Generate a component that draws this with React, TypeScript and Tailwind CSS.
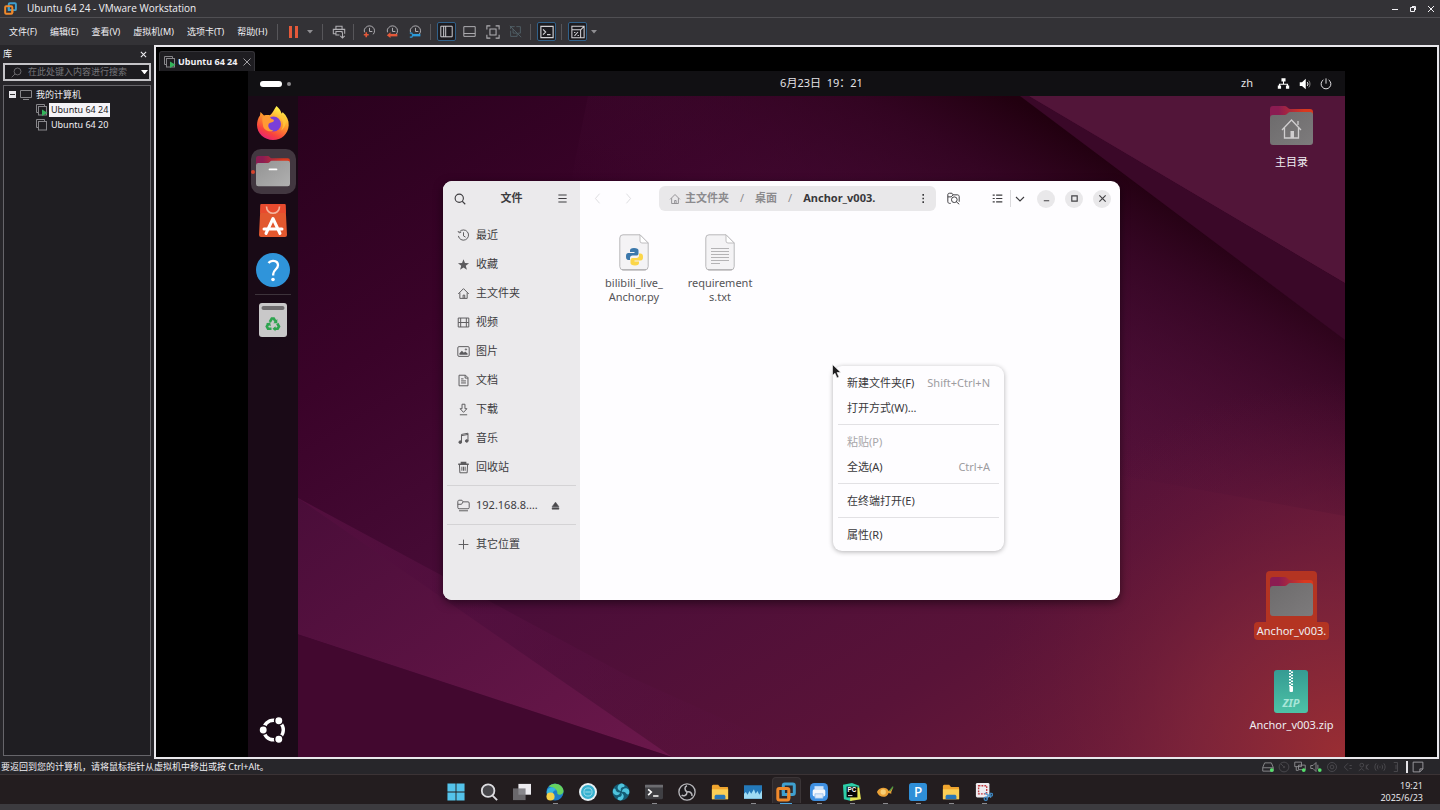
import React from "react";

type IconProps = { children: React.ReactNode; className?: string; box?: number; width?: number };

function Line({ children, className = "size-4", box = 16, width = 1 }: IconProps) {
  return (
    <svg aria-hidden="true" viewBox={`0 0 ${box} ${box}`} className={`shrink-0 ${className}`} fill="none" stroke="currentColor" strokeWidth={width}>
      {children}
    </svg>
  );
}

function VmwareLogo({ className }: { className: string }) {
  return (
    <svg aria-hidden="true" viewBox="0 0 20 20" className={`shrink-0 ${className}`} fill="none" strokeWidth="3">
      <rect x="7.300" y="2" width="11" height="10.500" rx="1.500" stroke="#3fa0cf" />
      <rect x="1.800" y="6.500" width="11" height="11.500" rx="1.500" stroke="#f0892b" />
      <path d="M7.300 8v4.500H11" stroke="#3fa0cf" />
      <path d="M12.800 11.500v5" stroke="#f0892b" />
    </svg>
  );
}

function VmIcon({ on }: { on: boolean }) {
  return (
    <Line className="size-[12px] text-[#87868a]" box={12}>
      <path d="M2.500 8.500h-2v-8h8v2" />
      <rect x="2.500" y="2.500" width="8" height="8.500" />
      {on && <path d="M6 5.500v6.500l5.500-3.200z" fill="#35b45c" stroke="none" />}
    </Line>
  );
}

function FolderArt({ id, mark, className }: { id: string; mark: "home" | "dash" | "none"; className: string }) {
  return (
    <svg aria-hidden="true" viewBox="0 0 43 40" className={className} preserveAspectRatio="none">
      <defs>
        <linearGradient id={`${id}t`} x1="0" x2="1">
          <stop offset="0.2" stopColor="#8b1c52" />
          <stop offset="0.8" stopColor="#d9391f" />
        </linearGradient>
        <linearGradient id={`${id}f`} x1="0" x2="1" y2="1">
          <stop offset="0" stopColor={mark === "dash" ? "#939393" : "#6d6b6c"} />
          <stop offset="1" stopColor={mark === "dash" ? "#b0b0b0" : "#7d7b7c"} />
        </linearGradient>
      </defs>
      <path d="M0 10V3a3 3 0 0 1 3-3h12c2 0 3 3 5 3h20a3 3 0 0 1 3 3v6H0z" fill={`url(#${id}t)`} />
      <path d="M0 12a3 3 0 0 1 3-3h12c2 0 3-3 5-3h20a3 3 0 0 1 3 3v27a3 3 0 0 1-3 3H3a3 3 0 0 1-3-3z" fill={`url(#${id}f)`} />
      {mark === "dash" && <rect x="16" y="16" width="11" height="2.500" rx="1.200" fill="#fff" />}
      {mark === "home" && (
        <g fill="none" stroke="#d0cecf" strokeWidth="1.300">
          <path d="M12 24l9.500-10 9.500 10M14.500 22v10h14V22M28 15v4" />
          <rect x="20.500" y="25" width="3.500" height="7" fill="#d0cecf" stroke="none" />
        </g>
      )}
    </svg>
  );
}

const HomeShape = <path d="M1.500 8.500L8 2l6.500 6.500M3.500 7v7h9V7M7.500 14v-4h2v4" />;

const places = [
  { name: "最近", icon: <path d="M3 3.500a6.300 6.300 0 1 1-1.300 5M1.200 2.500l1.500 2.300 2.500-1M8 4v4.500l2.500 1.500" /> },
  { name: "收藏", icon: <path d="M8 1.500l1.800 4.700 5 .2-4 3.100 1.400 4.900L8 11.600l-4.200 2.800 1.400-4.900-4-3.100 5-.2z" fill="currentColor" stroke="none" /> },
  { name: "主文件夹", icon: HomeShape },
  { name: "视频", icon: <path d="M1.500 2.500h13v11h-13zM4.500 2.500v11M11.500 2.500v11M4.500 8h7M1.500 8h3M11.500 8h3" /> },
  { name: "图片", icon: <><rect x="1" y="2" width="14" height="12" rx="1.500" /><path d="M3 12V10l3-3 2.500 2.500 1.500-1.500 3 2.500V12z" fill="currentColor" stroke="none" /><circle cx="11" cy="5.500" r=".8" /></> },
  { name: "文档", icon: <path d="M2.500 1.500h8l3 3v10h-11zM10 1.500v3.500h3.500M5 6h3M5 8.500h6M5 11h6" /> },
  { name: "下载", icon: <path d="M6.200 1.500h3.600V7h2.400L8 11.500 3.800 7h2.400zM3.500 14.500h9" /> },
  { name: "音乐", icon: <><path d="M5.500 12.500V3l8-1.500v9.500M5.500 4.500l8-1.500" /><circle cx="4" cy="12.500" r="1.600" fill="currentColor" /><circle cx="12" cy="11" r="1.600" fill="currentColor" /></> },
  { name: "回收站", icon: <><path d="M1.500 4h13M5.500 3.500V2h5v1.500" strokeWidth="2" /><path d="M3 4.500l.5 10h9l.5-10M6 7v5M8 7v5M10 7v5" /></> },
];

function Place({ name, icon, eject = false }: { name: string; icon: React.ReactNode; eject?: boolean }) {
  return (
    <li>
      <button className="flex h-[29px] w-full items-center gap-[6px] pl-[14px] pr-5 text-left">
        <Line className="size-[13px] text-[#5b5a5d]" width={1.2}>{icon}</Line>
        <span className="flex-1 whitespace-nowrap">{name}</span>
        {eject && <Line className="size-[9px] text-[#4a494c]"><path d="M8 2l6 8H2zM2 12h12v2.500H2z" fill="currentColor" /></Line>}
      </button>
    </li>
  );
}

function Sep() {
  return <span className="ml-[3px] mr-1 h-4 w-px bg-[#57565a]" />;
}

function Tool({ label, on = false, children }: { label: string; on?: boolean; children: React.ReactNode }) {
  return (
    <button aria-label={label} className="flex w-[23px] items-center justify-center">
      <span className={on ? "flex size-[19px] items-center justify-center rounded-[2px] border border-[#31618a] bg-[#1d1c20] text-[#d3d2d6]" : "flex size-[19px] items-center justify-center"}>
        {children}
      </span>
    </button>
  );
}

const clock = <><path d="M3.500 3a5.800 5.800 0 1 1 9 8.500M3 3.200A6 6 0 0 0 1.800 9M8 3.500v4.500h3.500" /></>;

function Toolbar() {
  return (
    <div className="flex items-center text-[#b1b0b4]">
      <Sep />
      <button aria-label="挂起" className="flex w-[23px] justify-center gap-[3px]">
        <span className="h-3 w-[3px] bg-[#e4593a]" />
        <span className="h-3 w-[3px] bg-[#e4593a]" />
      </button>
      <Caret />
      <Sep />
      <Tool label="发送"><Line className="size-[14px]" width={1.2}><path d="M4.500 5V1.500h7V5M8.500 11.500H4.500V7.500h7V9M4.500 10H1.500V5h13v5M12 8.500V15M9.500 12.500L12 15l2.500-2.500" /></Line></Tool>
      <Sep />
      <Tool label="拍摄快照"><Line className="size-[13px]" width={1.2}>{clock}<path d="M4 9v6M1 12h6" stroke="#e4593a" strokeWidth="2" /></Line></Tool>
      <Tool label="恢复快照"><Line className="size-[13px]" width={1.2}>{clock}<path d="M5 12.500h9" stroke="#e4593a" strokeWidth="3" /><path d="M1 12.500L5.500 9v7z" fill="#e4593a" stroke="none" /></Line></Tool>
      <Tool label="管理快照"><Line className="size-[13px]" width={1.2}>{clock}<path d="M4 12.500h10" stroke="#2d9cdb" strokeWidth="3" /><path d="M1 10h2.500l1 2.500-1 2.500H1" stroke="#2d9cdb" strokeWidth="1.500" /></Line></Tool>
      <Sep />
      <Tool label="显示库" on><Line className="size-[13px]" width={1.2}><path d="M1 1.500h14v13H1zM4.500 1.500v13M7 1.500v13" /></Line></Tool>
      <Tool label="缩略图"><Line className="size-[13px]" width={1.2}><path d="M1 2h14v12H1zM1 10.500h14" /></Line></Tool>
      <Tool label="全屏"><Line className="size-[14px]" width={1.2}><path d="M1 5V1h4M11 1h4v4M15 11v4h-4M5 15H1v-4M4.500 4.500h7v7h-7z" /></Line></Tool>
      <Tool label="Unity"><Line className="size-[13px] text-[#55666e]" width={1}><path d="M2 5V2h5M9 2h5v8h-3M2 7v7h8v-3M5 5v5h5M1 1l14 14" /></Line></Tool>
      <Sep />
      <Tool label="控制台" on><Line className="size-[14px]" width={1.3}><path d="M1 1.500h14v13H1zM3.500 5L6.500 8l-3 3M8 11h4" /></Line></Tool>
      <Sep />
      <Tool label="自由拉伸" on><Line className="size-[14px]" width={1.2}><path d="M1 5V1.500h14v13h-4M1 5.500h10v9H1zM11 5.500l4-4M8 8l-4 4.500M3.500 8.500h1.500M7.500 12h1.500" /></Line></Tool>
      <Caret />
    </div>
  );
}

function Caret() {
  return (
    <button aria-label="更多" className="flex w-[14px] pl-[2px] text-[#8f8e92]">
      <svg viewBox="0 0 6 4" className="w-[6px]"><path d="M0 0h6L3 3.500z" fill="currentColor" /></svg>
    </button>
  );
}

const menus = ["文件(F)", "编辑(E)", "查看(V)", "虚拟机(M)", "选项卡(T)", "帮助(H)"];

function Library() {
  return (
    <aside className="flex w-[154px] shrink-0 flex-col bg-[#27262a] pb-[3px] pl-[3px] pr-[3px] text-[9px]">
      <div className="flex h-[18px] items-center justify-between pr-1">
        <h2>库</h2>
        <button aria-label="关闭库"><Line className="size-[7px]" box={8} width={1.2}><path d="M1 1l6 6M7 1L1 7" /></Line></button>
      </div>
      <label className="flex h-[18px] items-center gap-[6px] border-2 border-[#c4c3c7] bg-[#1c1b1f] pl-[6px] pr-[1px]">
        <Line className="size-[11px] text-[#8a898d]"><path d="M1 15l5-5" /><circle cx="9.500" cy="6.500" r="5" /></Line>
        <input aria-label="搜索" placeholder="在此处键入内容进行搜索" className="min-w-0 flex-1 bg-transparent text-[9px] outline-none placeholder:text-[#77767a]" />
        <svg viewBox="0 0 8 5" className="w-[7px] shrink-0"><path d="M0 0h8L4 5z" fill="#fff" /></svg>
      </label>
      <div className="mt-1 flex-1 border border-[#66656a] bg-[#1f1e22] pt-px text-[#f1f0f4]">
        <div className="flex h-[15px] items-center gap-1 pl-[5px]">
          <span className="flex size-[7px] items-center justify-center bg-[#e8e7eb]"><span className="h-px w-[5px] bg-[#333]" /></span>
          <Line className="size-[12px] text-[#87868a]" box={12}><path d="M.5 1.500h11v7H.5zM3 10.500h6" /></Line>
          <span>我的计算机</span>
        </div>
        <div className="flex h-[15px] items-center gap-px pl-8">
          <VmIcon on />
          <button className="h-[14px] whitespace-nowrap bg-[#f4f3f7] px-[2px] leading-[14px] text-[#222]">Ubuntu 64 24</button>
        </div>
        <div className="flex h-[15px] items-center gap-px pl-8">
          <VmIcon on={false} />
          <button className="h-[14px] whitespace-nowrap px-[2px] leading-[14px]">Ubuntu 64 20</button>
        </div>
      </div>
    </aside>
  );
}

function Wallpaper() {
  return (
    <svg aria-hidden="true" viewBox="0 0 1097 661" preserveAspectRatio="none" className="absolute inset-0 size-full">
      <defs>
        <linearGradient id="base" x1="0" y1="0" x2="1" y2="1">
          <stop offset="0" stopColor="#28011c" />
          <stop offset="0.25" stopColor="#3a0329" />
          <stop offset="0.5" stopColor="#4a0d39" />
          <stop offset="0.75" stopColor="#591338" />
          <stop offset="1" stopColor="#742038" />
        </linearGradient>
        <radialGradient id="glow" gradientUnits="userSpaceOnUse" cx="1090" cy="655" r="370">
          <stop offset="0" stopColor="#982d33" />
          <stop offset="0.4" stopColor="#82263a" stopOpacity="0.7" />
          <stop offset="1" stopColor="#621539" stopOpacity="0" />
        </radialGradient>
        <linearGradient id="shade" gradientUnits="userSpaceOnUse" x1="900" y1="80" x2="750" y2="340">
          <stop offset="0" stopColor="#21000f" />
          <stop offset="0.25" stopColor="#30041f" stopOpacity="0.8" />
          <stop offset="1" stopColor="#4c0e3a" stopOpacity="0" />
        </linearGradient>
        <linearGradient id="beam" x1="0" x2="1" y2="1">
          <stop offset="0" stopColor="#4a0d39" />
          <stop offset="1" stopColor="#6b184b" />
        </linearGradient>
        <linearGradient id="sweep" x1="0" x2="1">
          <stop offset="0" stopColor="#5c1245" stopOpacity="0.7" />
          <stop offset="1" stopColor="#5c1245" stopOpacity="0" />
        </linearGradient>
      </defs>
      <rect width="1097" height="661" fill="url(#base)" />
      <path d="M340 0H780L1097 187V420L600 330 300 200z" fill="url(#shade)" />
      <path d="M50 402L50 538 424 661H560L380 580z" fill="url(#sweep)" />
      <path d="M50 402L50 538 424 661z" fill="url(#beam)" />
      <path d="M0 522L424 661H0z" fill="#42082f" />
      <path d="M772 0L1097 244V187L781 0z" fill="#3a0828" />
      <path d="M781 0H1097V187z" fill="#521539" />
      <rect width="1097" height="661" fill="url(#glow)" />
    </svg>
  );
}

function Firefox() {
  return (
    <svg aria-hidden="true" viewBox="0 0 34 34" className="size-[34px]">
      <defs>
        <linearGradient id="fx" x1="0.8" y1="0" x2="0.3" y2="1">
          <stop offset="0.1" stopColor="#fff04a" />
          <stop offset="0.45" stopColor="#ff9a2b" />
          <stop offset="0.8" stopColor="#f8403f" />
          <stop offset="1" stopColor="#e5227a" />
        </linearGradient>
      </defs>
      <path d="M20.500 0c3 2.500 4.500 5 5 7.500 1-.2 1-1.500 1-1.500 4.500 4 6.500 8.500 6.200 13.500C32.200 28 25.500 34 17 34S1 27.500 1 19c0-3.500 1-7 3-9.500L4.500 6l3.500 3.500c2-.5 4-.5 6-.2C17 7 18 3 20.500 0z" fill="url(#fx)" />
      <circle cx="17.500" cy="18" r="7.500" fill="#7a3fd8" />
      <path d="M6.500 10.500c4-1.500 8 0 9 2.500 2 .3 3 1 2 2.500-2 1.500-4.500 1-5 3-1 3 2 6 5 6-5 2.500-10-1-10.500-5-.5-3-1-5.500-.5-9z" fill="#ff9a34" />
      <path d="M20 8c4 1.500 7 5.500 7 10 0 3-1 5-2 6.500 5-3 6.500-10 3-15z" fill="#ffc83a" opacity=".75" />
    </svg>
  );
}

function Store() {
  return (
    <svg aria-hidden="true" viewBox="0 0 28 33" className="h-[33px] w-7">
      <path d="M2.500 0h23a1 1 0 0 1 1 1L28 31a2 2 0 0 1-2 2H2a2 2 0 0 1-2-2L1.500 1a1 1 0 0 1 1-1z" fill="#e2582f" />
      <path d="M2.500 0h23a1 1 0 0 1 1 1l.4 8H1.100l.4-8a1 1 0 0 1 1-1z" fill="#e84a2e" />
      <path d="M7.500 2.500c0 9 13 9 13 0" fill="none" stroke="#f4b59f" strokeWidth="1.600" />
      <path d="M7 29.500L14 14.500l7 15M5 25h18" fill="none" stroke="#fff" strokeWidth="3" strokeLinejoin="round" strokeLinecap="round" />
    </svg>
  );
}

function Help() {
  return (
    <svg aria-hidden="true" viewBox="0 0 34 34" className="size-[34px]">
      <circle cx="17" cy="17" r="17" fill="#2f94da" />
      <path d="M12.500 10c1-1.500 2.700-2.300 4.800-2.200 3 .2 4.700 2 4.700 4.500 0 4-4.800 4.500-4.800 8.700v1.500" fill="none" stroke="#fff" strokeWidth="2.300" />
      <circle cx="17" cy="26.500" r="1.800" fill="#fff" />
    </svg>
  );
}

function Trash() {
  return (
    <svg aria-hidden="true" viewBox="0 0 28 34" className="h-[34px] w-7">
      <rect width="28" height="34" rx="3" fill="#c9c8c9" />
      <rect x="2.500" y="3" width="23" height="4" rx="2" fill="#6f6d6f" />
      <g fill="none" stroke="#2ea44f" strokeWidth="2.600">
        <path d="M10.800 19l2-3.500h2l1.700 2.800M18.300 20.500l1.700 3-1.300 2.200H16M12.500 25.700H9l-1.200-2.200 1.700-3" />
      </g>
      <path d="M18.300 16v4.200h-4zM16.500 23.200v5l-3-2.500zM7 20.800l4.200-1.500.6 4z" fill="#2ea44f" />
    </svg>
  );
}

function UbuntuMark() {
  return (
    <svg aria-hidden="true" viewBox="0 0 28 28" className="size-7">
      <circle cx="14.500" cy="14" r="9.800" fill="none" stroke="#fff" strokeWidth="3.400" />
      <g fill="#fff" stroke="#1a0b17" strokeWidth="1.500">
        <circle cx="4.200" cy="14" r="4.200" />
        <circle cx="19.800" cy="4.800" r="4.200" />
        <circle cx="19.800" cy="23.200" r="4.200" />
      </g>
    </svg>
  );
}

function DockItem({ label, on = false, children }: { label: string; on?: boolean; children: React.ReactNode }) {
  return (
    <button aria-label={label} className="relative flex h-[49px] w-full items-center justify-center">
      <span className={on ? "flex size-[45px] items-center justify-center rounded-[10px] bg-[#423740]" : "flex size-[45px] items-center justify-center"}>{children}</span>
      {on && <span className="absolute left-[3px] size-[4px] rounded-full bg-[#d6432c]" />}
    </button>
  );
}

function Sheet({ children }: { children: React.ReactNode }) {
  return (
    <svg aria-hidden="true" viewBox="0 0 30 37" className="h-[37px] w-[30px]">
      <path d="M4 .8h17L29.200 9v23.500a3.500 3.500 0 0 1-3.500 3.500H4.300a3.500 3.500 0 0 1-3.500-3.500V4A3.200 3.200 0 0 1 4 .8z" fill="#f4f3f5" stroke="#b9b8ba" strokeWidth="1" />
      <path d="M21 .8V7a2 2 0 0 0 2 2h6.200z" fill="#fff" stroke="#b9b8ba" strokeWidth=".9" />
      <path d="M3 35.800h24" stroke="#aaa9ab" />
      {children}
    </svg>
  );
}

function MenuItem({ name, keys, off = false }: { name: string; keys?: string; off?: boolean }) {
  return (
    <button role="menuitem" disabled={off} className={`flex h-[25px] w-full items-center justify-between whitespace-nowrap pl-[14px] pr-[14px] ${off ? "text-[#a7a6a9]" : "text-[#3a393c]"}`}>
      <span>{name}</span>
      {keys && <span className="text-[#9d9c9f]">{keys}</span>}
    </button>
  );
}

function MenuRule() {
  return <hr className="mx-[5px] mb-[5px] mt-[3px] border-[#e2e1e4]" />;
}

function RoundButton({ label, children }: { label: string; children: React.ReactNode }) {
  return (
    <button aria-label={label} className="flex size-[18px] items-center justify-center rounded-full bg-[#e9e8ea] text-[#434245]">
      <Line className="size-[9px]" box={10} width={1.3}>{children}</Line>
    </button>
  );
}

function Files() {
  return (
    <section aria-label="文件" className="absolute left-[195px] top-[85px] flex h-[419px] w-[677px] overflow-hidden rounded-[9px] bg-[#fefdff] text-[11px] text-[#3d3c3f] shadow-[0_3px_10px_rgba(0,0,0,0.5)]">
      <div className="w-[137px] shrink-0 bg-[#ebeaec]">
        <header className="flex h-[35px] items-center justify-between px-[11px]">
          <button aria-label="搜索"><Line className="size-3" width={1.5}><circle cx="7" cy="7" r="5.500" /><path d="M11 11l4 4" /></Line></button>
          <h1 className="text-[11px] font-bold">文件</h1>
          <button aria-label="菜单" className="pr-[1px]"><Line className="size-[11px]" width={1.5}><path d="M2 3h12M2 8h12M2 13h12" /></Line></button>
        </header>
        <ul className="pt-[5px]">
          {places.map((p) => <Place key={p.name} {...p} />)}
        </ul>
        <hr className="mx-1 mb-[5px] mt-[3px] border-[#d4d3d5]" />
        <ul><Place name="192.168.8.…" eject icon={<path d="M1 3.500c0-1 .5-2 1.500-2h3.500l1.500 2h6c1 0 1.500.5 1.500 1.500v5.500c0 1-.5 1.500-1.500 1.500h-11C1.500 12 1 11.500 1 10.500zM1 6.500h4.500l2-3M2.500 14.500h11" />} /></ul>
        <hr className="mx-1 mb-[5px] mt-1 border-[#d4d3d5]" />
        <ul><Place name="其它位置" icon={<path d="M8 2v12M2 8h12" />} /></ul>
      </div>
      <div className="min-w-0 flex-1">
        <header className="flex h-[35px] items-center pl-3 pr-[9px]">
          <div className="flex w-[67px] items-center gap-5 text-[#d2d1d4]">
            <button aria-label="后退"><Line className="size-[11px]"><path d="M11 1L5 8l6 7" /></Line></button>
            <button aria-label="前进"><Line className="size-[11px]"><path d="M5 1l6 7-6 7" /></Line></button>
          </div>
          <nav aria-label="路径" className="flex h-[25px] flex-1 items-center gap-[11px] rounded-[6px] bg-[#e9e8ea] pl-[10px] pr-3 text-[#8c8b8e]">
            <a href="#home" className="flex items-center gap-1 whitespace-nowrap font-bold"><Line className="size-[12px]" width={1.2}>{HomeShape}</Line>主文件夹</a>
            <span>/</span>
            <a href="#desktop" className="whitespace-nowrap font-bold">桌面</a>
            <span>/</span>
            <a href="#anchor" className="flex-1 font-bold text-[#39383b]">Anchor_v003.</a>
            <button aria-label="选项" className="text-[#39383b]"><svg viewBox="0 0 3 11" className="h-[9px]"><path d="M.5 0h2v2h-2zM.5 4.500h2v2h-2zM.5 9h2v2h-2z" fill="currentColor" /></svg></button>
          </nav>
          <button aria-label="搜索文件夹" className="ml-[11px] mr-8"><Line className="size-[13px]" width={1.2}><path d="M4.500 14H3c-1 0-2-1-2-2V3.500C1 2 2 1.500 3 1.500h3l1.500 2H13c1 0 2 1 2 2V12M1 6h4l2.500-2.500" /><circle cx="9" cy="9.500" r="3.500" /><path d="M11.500 12L15 15" /></Line></button>
          <button aria-label="列表视图"><Line className="size-[11px]" width={1.8}><path d="M1 3h3M1 8h3M1 13h3M6 3h9M6 8h9M6 13h9" /></Line></button>
          <span className="ml-[7px] mr-1 h-[17px] w-px bg-[#dbdadd]" />
          <button aria-label="视图选项"><Line className="size-[10px]" box={10} width={1.1}><path d="M1 3l4 4 4-4" /></Line></button>
          <div className="ml-3 flex gap-[10px]">
            <RoundButton label="最小化"><path d="M2 7.500h6" /></RoundButton>
            <RoundButton label="最大化"><path d="M2 2h6v6H2z" /></RoundButton>
            <RoundButton label="关闭"><path d="M1.500 1.500l7 7M8.500 1.500l-7 7" /></RoundButton>
          </div>
        </header>
        <div className="flex pl-[11px] pt-[18px] leading-[14px] text-[#555457]">
          <button className="flex w-[86px] flex-col items-center gap-[5px]">
            <Sheet>
              <path d="M15 14c-3 0-4 1-4 2.500V18h4.500v1H9.500C7.500 19 7 20.500 7 22.500s.5 3.500 2.500 3.500H11v-2c0-1.500 1-2.500 2.500-2.500h4c1.300 0 2-1 2-2v-3c0-1.500-1.500-2.500-4.500-2.500z" fill="#3b78ab" />
              <path d="M16 31.500c3 0 4-1 4-2.500v-1.500h-4.500v-1h6c2 0 2.500-1.500 2.500-3.500s-.5-3.500-2.500-3.500H20v2c0 1.500-1 2.500-2.500 2.500h-4c-1.300 0-2 1-2 2v3c0 1.500 1.500 2.500 4.500 2.500z" fill="#fbd649" />
            </Sheet>
            <span>bilibili_live_<br />Anchor.py</span>
          </button>
          <button className="flex w-[86px] flex-col items-center gap-[5px]">
            <Sheet><path d="M6 14.500h18M6 17.500h18M6 20.500h18M6 23.500h18M6 26.500h18M6 29.500h9" stroke="#b4b3b5" strokeWidth="1.200" /></Sheet>
            <span>requirement<br />s.txt</span>
          </button>
        </div>
      </div>
    </section>
  );
}

function Guest() {
  return (
    <div className="relative flex min-w-0 flex-1 flex-col">
      <header className="grid h-[25px] shrink-0 grid-cols-3 items-center bg-[#111013] px-3 text-[11px] text-[#e4e3e6]">
        <button aria-label="活动" className="flex items-center gap-[5px]">
          <span className="h-[6px] w-[22px] rounded-full bg-white" />
          <span className="size-[4px] rounded-full bg-[#8b8a8d]" />
        </button>
        <button className="whitespace-nowrap pl-[50px] text-center">6月23日&nbsp; 19：21</button>
        <div className="flex items-center justify-end pr-px">
          <button className="mr-6">zh</button>
          <button aria-label="系统" className="flex items-center gap-[9px]">
            <Line className="size-[13px] text-white" width={1.3}><path d="M8 5v4M3 11V9h10v2" /><path d="M5.500 1.500h5v4h-5zM1 10.500h4v4H1zM11 10.500h4v4h-4z" fill="currentColor" stroke="none" /></Line>
            <Line className="size-[12px] text-white" width={1.3}><path d="M1 5.500h3L9 1v14l-5-4.500H1z" fill="currentColor" stroke="none" /><path d="M11 5.500c1.200 1.500 1.200 3.500 0 5" /><path d="M13 3.500c2.200 2.500 2.200 6.500 0 9" opacity=".5" /></Line>
            <Line className="size-[12px]" width={1.3}><path d="M4.500 2.500a6.500 6.500 0 1 0 7 0M8 .5v7" /></Line>
          </button>
        </div>
      </header>
      <div className="relative flex min-h-0 flex-1">
        <Wallpaper />
        <nav aria-label="程序坞" className="relative flex w-[50px] flex-col items-center bg-[#180b16]/95 pb-[3px] pt-[2px]">
          <DockItem label="Firefox"><Firefox /></DockItem>
          <DockItem label="文件" on><FolderArt id="dock" mark="dash" className="h-[31px] w-[34px]" /></DockItem>
          <DockItem label="应用中心"><Store /></DockItem>
          <DockItem label="帮助"><Help /></DockItem>
          <span className="h-px w-9 bg-[#3d333b]" />
          <DockItem label="回收站"><Trash /></DockItem>
          <div className="mt-auto w-full"><DockItem label="显示应用"><UbuntuMark /></DockItem></div>
        </nav>
        <div className="relative ml-auto flex w-[107px] flex-col items-center pb-[23px] pt-[10px] text-[11px] leading-[18px] text-[#efeef1]">
          <button className="flex flex-col items-center gap-[7px]">
            <FolderArt id="home" mark="home" className="h-10 w-[43px]" />
            <span>主目录</span>
          </button>
          <button className="mt-auto flex flex-col items-center">
            <span className="rounded-t-[4px] bg-[#b43422] px-1 pb-[5px] pt-[6px]"><FolderArt id="anchor" mark="none" className="h-10 w-[43px]" /></span>
            <span className="rounded-[4px] bg-[#b43422] px-[3px]">Anchor_v003.</span>
          </button>
          <button className="mt-[30px] flex flex-col items-center gap-[3px]">
            <svg aria-hidden="true" viewBox="0 0 34 43" className="h-[43px] w-[34px]">
              <defs><linearGradient id="zip" y1="0" y2="1" x2="0"><stop stopColor="#359b93" /><stop offset="1" stopColor="#4dc2a6" /></linearGradient></defs>
              <rect width="34" height="43" rx="3" fill="url(#zip)" />
              <path d="M16 0v17" stroke="#fff" strokeWidth="2" strokeDasharray="1.500 1.500" />
              <path d="M18 1.500v15" stroke="#fff" strokeWidth="2" strokeDasharray="1.500 1.500" />
              <rect x="15.500" y="16" width="3.500" height="6" rx="1" fill="#fff" />
              <text x="17" y="36.500" textAnchor="middle" fontFamily="Noto Sans, sans-serif" fontStyle="italic" fontWeight="700" fontSize="11" fill="#a8e6d8">ZIP</text>
            </svg>
            <span className="whitespace-nowrap">Anchor_v003.zip</span>
          </button>
        </div>
        <Files />
        <div role="menu" className="absolute left-[585px] top-[270px] w-[171px] rounded-[9px] bg-[#fefdff] pb-[3px] pt-[5px] text-[11px] shadow-[0_1px_5px_rgba(0,0,0,0.3)]">
          <MenuItem name="新建文件夹(F)" keys="Shift+Ctrl+N" />
          <MenuItem name="打开方式(W)…" />
          <MenuRule />
          <MenuItem name="粘贴(P)" off />
          <MenuItem name="全选(A)" keys="Ctrl+A" />
          <MenuRule />
          <MenuItem name="在终端打开(E)" />
          <MenuRule />
          <MenuItem name="属性(R)" />
        </div>
        <svg aria-hidden="true" viewBox="0 0 10 15" className="absolute left-[584px] top-[268px] h-[15px] w-[10px]">
          <path d="M.5.5v11L3 9.200l2 4.800 2-.9-2-4.600h3.800z" fill="#1f1e20" stroke="#fff" strokeWidth=".6" />
        </svg>
      </div>
    </div>
  );
}

const devices = [
  { name: "硬盘", on: true, lit: true, icon: <path d="M1 8.500L3.500 2.500h9L15 8.500v5H1zM1 9h14" /> },
  { name: "光驱", on: false, lit: false, icon: <><circle cx="8" cy="8" r="6.500" /><circle cx="8" cy="8" r="1" /><path d="M4 4l3 3" /></> },
  { name: "网络", on: true, lit: true, icon: <path d="M1 1.500h9v6H1zM6 5.500h9v6H6zM3 7.500v5h3" /> },
  { name: "声音", on: true, lit: true, icon: <path d="M1 6h3l4-4v12l-4-4H1zM10.500 5v6" /> },
  { name: "摄像头", on: false, lit: false, icon: <><circle cx="8" cy="8" r="6" /><circle cx="8" cy="8" r="2.500" /></> },
  { name: "扬声器", on: false, lit: false, icon: <path d="M8 3L3 8l5 5M10 6h3M10 10h3" /> },
  { name: "麦克风", on: false, lit: false, icon: <><circle cx="5" cy="5.500" r="2.500" /><path d="M1 13l4-3 3 3M11 5v6M14 4l-3 4 3 4" /></> },
  { name: "无线", on: false, lit: false, icon: <path d="M3 3C.5 6 .5 10 3 13M13 3c2.500 3 2.500 7 0 10M5.500 5c-1.300 2-1.300 4 0 6M10.500 5c1.300 2 1.300 4 0 6M8 7v2" /> },
  { name: "USB", on: false, lit: false, icon: <path d="M5 2h5v12H5M8 5v6" /> },
];

function FolderTask() {
  return <><path d="M1 4c0-1 .5-2 1.500-2H8l2 2.500h8c.6 0 1 .5 1 1V18H1z" fill="#f0a52e" /><path d="M1 7h18v11H1z" fill="#fbcf55" /><path d="M4 18v-3c0-1.500 1-2 2-2h8c1 0 2 .5 2 2v3z" fill="#2877b8" /></>;
}

const tasks: { name: string; open: boolean; active?: boolean; icon: React.ReactNode }[] = [
  { name: "开始", open: false, icon: <path d="M.5.500h9v9h-9zM10.500.500h9v9h-9zM.5 10.500h9v9h-9zM10.500 10.500h9v9h-9z" fill="#54c3ea" /> },
  { name: "搜索", open: false, icon: <g fill="#47464a" stroke="#dddce0" strokeWidth="2"><circle cx="9" cy="8.500" r="7" /><path d="M14 14l5 5" /></g> },
  { name: "任务视图", open: false, icon: <><path d="M6 1h14v12H6z" fill="#ecebef" /><path d="M0 6h14v13H0z" fill="#77767a" opacity=".85" /></> },
  { name: "Edge", open: true, icon: <><circle cx="10" cy="10" r="9.500" fill="#1e7ec8" /><path d="M3 4c5-6 16-3 16.500 5 0 4-5 5-7 3 1-5-5-7-9.500-8z" fill="#67d35f" /><path d="M1 9c2-6 9-5 10-1-4 0-5 6-1 9-5 3-10-2-9-8z" fill="#36b5df" /><circle cx="5" cy="15" r="4.500" fill="#f4d14a" /></> },
  { name: "浏览器", open: false, icon: <><circle cx="10" cy="10" r="10" fill="#e9f1f4" /><circle cx="10" cy="10" r="7.800" fill="#37b1cf" /><circle cx="10" cy="10" r="4.500" stroke="#a4e1ee" fill="none" /><path d="M7 10h6" stroke="#a4e1ee" /></> },
  { name: "同步", open: false, icon: <><circle cx="10" cy="10" r="9.500" fill="#145c74" /><path d="M10 9C5 8 5 2 10 .5c4 0 5 3 3 4-3 0-4 2-3 4.500zM11 10c0-4 5-6 8-2 1 4-1 6-3 4-1-2-3-3-5-2zM10.500 11c4 2 3 7-1 8.500-4-.5-4-3-2-4 3 0 4-2 3-4.500zM9 10.500c-1 4-6 4-8 0C.500 6 3 5 4 7c0 2 2 4 5 3.500z" fill="#4ec3dc" /></> },
  { name: "终端", open: true, icon: <><rect y="2" width="20" height="16" rx="1.500" fill="#3f3f43" /><path d="M0 2h20v3H0z" fill="#6c6c70" /><path d="M3.500 7l3.500 3-3.500 3.500M9 14.500h6" stroke="#fff" strokeWidth="1.800" fill="none" /></> },
  { name: "OBS", open: false, icon: <><circle cx="10" cy="10" r="9" fill="#1c1a1d" stroke="#b7b6ba" strokeWidth="1.500" /><path d="M10 10C7 8 7 4 10 3M10 10c4-1 6 2 5.500 4.500M10 10c0 4-4 5-6 3.500" fill="none" stroke="#b7b6ba" strokeWidth="1.700" /></> },
  { name: "资源管理器", open: false, icon: <FolderTask /> },
  { name: "监视器", open: true, icon: <><rect y="2.500" width="20" height="15" fill="#2479b9" /><path d="M0 17.500V12l2-2 2 3 2-4 2 3 3-5 2 5 2-3 2 4 3-5v9.500z" fill="#9edbf3" /></> },
  { name: "VMware", open: true, active: true, icon: null },
  { name: "打印", open: true, icon: <><rect width="20" height="20" rx="5" fill="#3f90e2" /><path d="M5 3.500h10V7H5z" fill="#cfe3f8" /><rect x="3" y="7" width="14" height="8" rx="2" fill="#f5f8fd" /><path d="M5.500 12h9v5h-9z" fill="#e1ecfa" stroke="#80b4ec" strokeWidth=".7" /></> },
  { name: "PyCharm", open: true, icon: <><path d="M0 2l10-2 8 3v9l-9 8-8-2z" fill="#2ccfa8" /><path d="M8 6l10-1 2 13-12 2z" fill="#e6e552" /><path d="M4 4h12v12H4z" fill="#050505" /><text x="5" y="10.500" fontFamily="Liberation Sans, sans-serif" fontSize="7" fontWeight="700" fill="#fff">PC</text><path d="M5.500 14h5" stroke="#fff" /></> },
  { name: "词典", open: true, icon: <><path d="M1 10c3-6 11-6 13-1l5-4-2 5 0 2-3-1c-2 6-10 6-13-1z" fill="#eaa136" /><circle cx="8" cy="10" r="3" fill="#f8cf75" /><path d="M15 9l4-5" stroke="#4b9a42" strokeWidth="1.500" /></> },
  { name: "P", open: true, icon: <><rect width="20" height="20" rx="3" fill="#2f8fd8" /><text x="10" y="15.500" textAnchor="middle" fontFamily="Noto Sans, sans-serif" fontSize="15" fontWeight="500" fill="#fff">P</text></> },
  { name: "文件夹", open: true, icon: <FolderTask /> },
  { name: "截图工具", open: true, icon: <><rect x="1" width="15" height="16" rx="1.500" fill="#eeedf1" /><path d="M4 3h9v9H4z" fill="none" stroke="#c23a3f" strokeWidth="1.500" strokeDasharray="2 1.200" /><path d="M11 11l7 5M18 11l-6 6" stroke="#5c9dcc" strokeWidth="1.600" /><circle cx="12" cy="17.500" r="1.800" fill="none" stroke="#3b83bd" strokeWidth="1.500" /><circle cx="18" cy="13" r="1.500" fill="none" stroke="#3b83bd" strokeWidth="1.500" /></> },
];

export default function App() {
  return (
    <div className="flex h-screen min-h-[760px] flex-col overflow-hidden bg-[#333236] font-['Noto_Sans','Noto_Sans_CJK_SC',sans-serif] text-[#f1f0f4]">
      <header className="flex h-[18px] shrink-0 items-center border-b border-[#504f53] pl-1 pr-[6px] font-['Open_Sans',sans-serif] text-[10px]">
        <VmwareLogo className="size-[13px]" />
        <h1 className="ml-[10px] flex-1">Ubuntu 64 24 - VMware Workstation</h1>
        <div className="flex gap-3">
          <button aria-label="最小化"><Line className="size-[6px]" box={6}><path d="M0 3.500h6" /></Line></button>
          <button aria-label="还原"><Line className="size-[6px]" box={6}><path d="M.5 1.500h4v4h-4zM2 .5h3.500V4" /></Line></button>
          <button aria-label="关闭"><Line className="size-[6px]" box={6}><path d="M0 0l6 6M6 0L0 6" /></Line></button>
        </div>
      </header>
      <div className="flex h-[27px] shrink-0 items-center pl-[9px]">
        <nav aria-label="菜单栏" className="flex gap-[13px] pr-[7px] text-[9px]">
          {menus.map((m) => <button key={m} className="whitespace-nowrap">{m}</button>)}
        </nav>
        <Toolbar />
      </div>
      <main className="flex min-h-0 flex-1">
        <Library />
        <div className="mr-px flex min-w-0 flex-1 flex-col border-2 border-[#e9e8ec] bg-black">
          <div className="flex h-6 shrink-0 items-end pl-[3px]">
            <div className="flex h-5 items-center gap-[2px] rounded-t-[3px] border border-b-0 border-[#343338] bg-[#1e1d21] pl-1 pr-[3px]">
              <VmIcon on />
              <button className="whitespace-nowrap font-['Open_Sans',sans-serif] text-[9px] font-bold">Ubuntu 64 24</button>
              <button aria-label="关闭选项卡" className="ml-1 text-[#a09fa3]"><Line className="size-[8px]" box={8}><path d="M.5.5l7 7M7.500.5l-7 7" /></Line></button>
            </div>
          </div>
          <div className="flex min-h-0 flex-1 px-[92px]"><Guest /></div>
        </div>
      </main>
      <footer className="flex h-[15px] shrink-0 items-center justify-between bg-[#27262a] pl-px pr-4 pt-px text-[9px]">
        <p>要返回到您的计算机，请将鼠标指针从虚拟机中移出或按 Ctrl+Alt。</p>
        <div className="flex items-center gap-1">
          {devices.map((d) => (
            <button key={d.name} aria-label={d.name} className={d.on ? "text-[#8f8e92]" : "text-[#4c4b4f]"}>
              <Line className="size-3" width={1.2}>{d.icon}{d.lit && <circle cx="13" cy="12" r="2.500" fill="#55df6b" stroke="none" />}</Line>
            </button>
          ))}
          <span className="h-3 w-[2px] bg-[#e5e4e8]" />
          <button aria-label="消息" className="text-[#a3a2a6]"><Line className="size-3" width={1.2}><path d="M1.500 1.500h13v9l-4 4h-9zM14.500 10.500h-4v4" /></Line></button>
        </div>
      </footer>
      <div className="grid h-[30px] shrink-0 grid-cols-[1fr_auto_1fr] border-t border-[#3b3335] bg-[#231d1f]">
        <span />
        <nav aria-label="任务栏" className="flex">
          {tasks.map((t) => (
            <button key={t.name} aria-label={t.name} className="flex w-[33px] flex-col items-center justify-end">
              <span className={t.active ? "flex h-[26px] w-[29px] items-center justify-center rounded-t-[4px] border border-b-0 border-[#3b3537] bg-[#2f292b] pt-[3px]" : "flex h-[26px] w-[29px] items-center justify-center pt-1"}>
                {t.icon ? <svg aria-hidden="true" viewBox="0 0 20 20" className="size-[18px]">{t.icon}</svg> : <VmwareLogo className="size-5" />}
              </span>
              <span className={t.active ? "h-px w-3 bg-[#4aa5e0]" : t.open ? "h-px w-[5px] bg-[#8b8a8e]" : "h-px w-px"} />
            </button>
          ))}
        </nav>
        <div className="pr-[17px] pt-[5px] text-right font-['Open_Sans',sans-serif] text-[9px] leading-[12px]">
          <p>19:21</p>
          <p>2025/6/23</p>
        </div>
      </div>
      <div className="h-[6px] shrink-0 bg-[#3c3b3f]" />
    </div>
  );
}
